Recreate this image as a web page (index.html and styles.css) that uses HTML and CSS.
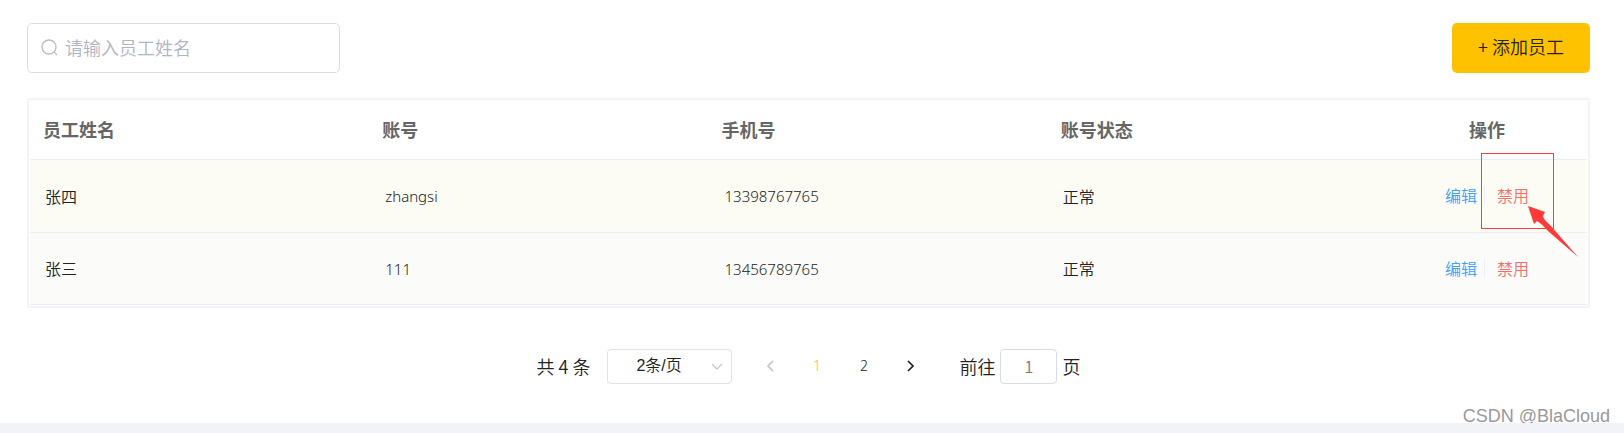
FILE: index.html
```html
<!DOCTYPE html>
<html lang="zh-CN">
<head>
<meta charset="utf-8">
<title>员工管理</title>
<link rel="stylesheet" href="styles.css">
</head>
<body>
<main class="panel">
  <div class="toolbar">
    <label class="search">
      <svg class="search-icon" viewBox="0 0 17 17" aria-hidden="true"><circle cx="8" cy="8" r="7"/><path d="M13 13l3 3"/></svg>
      <input class="search-input" type="text" placeholder="请输入员工姓名" aria-label="员工姓名">
    </label>
    <button class="add-button" type="button">+ 添加员工</button>
  </div>

  <div class="table-box">
    <table class="staff">
      <colgroup><col><col><col><col><col class="action-col"></colgroup>
      <thead>
        <tr><th>员工姓名</th><th>账号</th><th>手机号</th><th>账号状态</th><th class="center">操作</th></tr>
      </thead>
      <tbody>
        <tr class="hovered">
          <td>张四</td><td class="latin">zhangsi</td><td class="latin">13398767765</td><td>正常</td>
          <td class="action-cell">
            <div class="actions"><button class="edit" type="button">编辑</button><button class="disable" type="button">禁用</button></div>
            <div class="highlight"></div>
            <svg class="arrow" viewBox="0 0 50 52" aria-hidden="true"><path d="M0 0L17 6L15 10Q15 13 22 19L50 51L20 25Q13 17 9 15L6 18Z"/></svg>
          </td>
        </tr>
        <tr>
          <td>张三</td><td class="latin">111</td><td class="latin">13456789765</td><td>正常</td>
          <td class="action-cell">
            <div class="actions"><button class="edit" type="button">编辑</button><button class="disable" type="button">禁用</button></div>
          </td>
        </tr>
      </tbody>
    </table>
  </div>

  <nav class="pagination" aria-label="分页">
    <span class="total">共 4 条</span>
    <span class="size-box">
      <select class="size" aria-label="每页条数"><option>2条/页</option></select>
      <svg class="size-icon" viewBox="0 0 12 8" aria-hidden="true"><path d="M1 1l5 5 5-5"/></svg>
    </span>
    <span class="pager">
      <button class="page" type="button" disabled aria-label="上一页"><svg class="chevron" viewBox="0 0 8 12" aria-hidden="true"><path d="M7 1L2 6l5 5"/></svg></button>
      <button class="page current" type="button">1</button>
      <button class="page" type="button">2</button>
      <button class="page" type="button" aria-label="下一页"><svg class="chevron" viewBox="0 0 8 12" aria-hidden="true"><path d="M1 1l5 5-5 5"/></svg></button>
    </span>
    <label class="jump">前往<input class="jump-input" type="text" value="1">页</label>
  </nav>
  <div class="watermark">CSDN @BlaCloud</div>
</main>
</body>
</html>
```
FILE: styles.css
```css
* { box-sizing: border-box; }

body {
  margin: 0;
  background: #f2f3f8;
  color: #222;
  font-family: "Noto Sans CJK SC", sans-serif;
  font-size: 16px;
  font-weight: 350;
  line-height: 24px;
}

button, input, select { font: inherit; color: inherit; margin: 0; }
button { border: 0; background: none; padding: 0; cursor: pointer; }

.panel {
  position: relative;
  background: #fff;
  padding: 23px 34px 39px 27px;
}

.toolbar {
  display: flex;
  justify-content: space-between;
  margin-bottom: 25px;
}

.search {
  display: flex;
  align-items: center;
  gap: 7px;
  width: 313px;
  height: 50px;
  padding: 0 13px 2px;
  border: 1px solid #d8dce5;
  border-radius: 5px;
}

.search-icon {
  width: 17px;
  height: 17px;
  flex: none;
  fill: none;
  stroke: #b8bcc8;
  stroke-width: 1.3;
}

.search-input {
  flex: 1;
  min-width: 0;
  padding: 0;
  border: 0;
  outline: 0;
  background: none;
  font-size: 18px;
}

.search-input::placeholder { color: #b0b4c5; opacity: 1; }

.add-button {
  width: 138px;
  height: 50px;
  padding-bottom: 4px;
  border-radius: 5px;
  background: #ffc200;
  font-size: 18px;
}

.table-box {
  padding: 1px;
  border: 2px solid #f3f4fa;
  border-radius: 3px;
}

.staff {
  width: 100%;
  table-layout: fixed;
  border-spacing: 0;
}

.action-col { width: 200px; }

.staff th, .staff td {
  padding: 0 15px 1px;
  text-align: left;
  border-bottom: 1px solid #ebeef5;
}

.staff th {
  height: 59px;
  padding: 0 13px 2px;
  color: #666;
  font-size: 18px;
  font-weight: 700;
}

.staff .center { text-align: center; }
.staff td { height: 72px; background: #fbfbfa; }
.staff .hovered td { height: 73px; background: #fdfcf4; }

.staff .latin {
  padding: 0 16px;
  font-family: "Noto Sans", sans-serif;
  font-size: 15px;
}

.staff .action-cell { position: relative; padding: 0 14px 2px; }
.actions { display: flex; justify-content: center; }
.actions .edit { color: #409eff; padding-right: 7px; line-height: 18px; }

.actions .disable {
  color: #f56c6c;
  padding-left: 12px;
  line-height: 18px;
  border-left: 1px solid #ebeef5;
}

.highlight {
  position: absolute;
  top: -7px;
  right: 33px;
  width: 73px;
  height: 76px;
  border: 1px solid #f93e3e;
}

.arrow {
  position: absolute;
  z-index: 1;
  top: 46px;
  right: 9px;
  width: 50px;
  height: 52px;
  fill: #ff3838;
  pointer-events: none;
}

.pagination {
  display: flex;
  justify-content: center;
  align-items: center;
  margin-top: 40px;
  height: 36px;
  font-size: 18px;
}

.size-box {
  position: relative;
  margin-left: 17px;
  width: 125px;
}

.size {
  display: block;
  width: 100%;
  height: 35px;
  padding: 0 28px;
  appearance: none;
  border: 1px solid #e0e2e6;
  border-radius: 4px;
  background: #fff;
  font-family: "Liberation Sans", "Noto Sans CJK SC", sans-serif;
  font-size: 16px;
}

.size-icon {
  position: absolute;
  top: 14px;
  right: 9px;
  width: 12px;
  height: 8px;
  fill: none;
  stroke: #c0c4cc;
  stroke-width: 1.2;
}

.pager { display: flex; margin: 0 25px 0 14px; }

.page {
  display: flex;
  align-items: center;
  justify-content: center;
  width: 47px;
  height: 35px;
  font-family: "Noto Sans", sans-serif;
  font-size: 14px;
}

.page:disabled { color: #c0c4cc; }
.page.current { color: #ffb72f; }

.chevron {
  width: 8px;
  height: 12px;
  fill: none;
  stroke: currentColor;
  stroke-width: 1.7;
}

.jump { display: flex; align-items: center; gap: 5px; }

.jump-input {
  width: 57px;
  height: 35px;
  padding: 0;
  border: 1px solid #d8dce5;
  border-radius: 4px;
  text-align: center;
  color: #777;
  outline: 0;
  font-size: 16px;
}

.watermark {
  position: absolute;
  right: 14px;
  bottom: -5px;
  color: #999;
  font-family: "Liberation Sans", sans-serif;
  font-size: 18px;
  text-shadow: 1px 1px 0 #fff;
}
```
